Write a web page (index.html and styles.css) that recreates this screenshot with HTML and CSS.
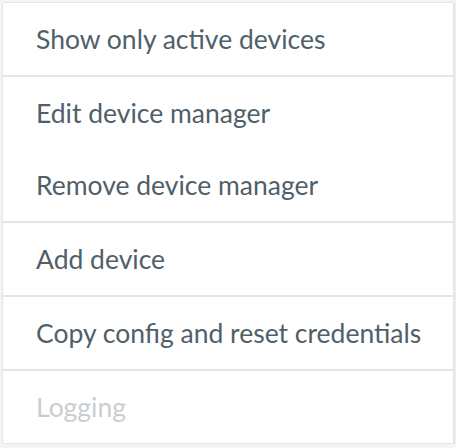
FILE: index.html
```html
<!DOCTYPE html>
<html>
<head>
<meta charset="utf-8">
<link rel="stylesheet" href="styles.css">
</head>
<body>
<div class="menu">
  <div class="group"><div class="item">Show only active devices</div></div>
  <div class="group"><div class="item">Edit device manager</div><div class="item">Remove device manager</div></div>
  <div class="group"><div class="item">Add device</div></div>
  <div class="group"><div class="item">Copy config and reset credentials</div></div>
  <div class="group"><div class="item disabled">Logging</div></div>
</div>
</body>
</html>
```
FILE: styles.css
```css
html, body {
  margin: 0;
  padding: 0;
  background: #f3f4f5;
}
body {
  padding: 2px 2px 0 2px;
  font-family: Lato, "Open Sans", sans-serif;
}
.menu {
  width: 450px;
  background: #ffffff;
  border: 1px solid #e4e7e9;
  box-shadow: 1px 1px 2px rgba(0, 0, 0, 0.08);
  border-radius: 2px;
}
.group + .group {
  border-top: 2px solid #e2e6e8;
}
.item {
  height: 72px;
  display: flex;
  align-items: center;
  padding-left: 33px;
  font-size: 26.5px;
  color: #50606a;
}
.item.disabled {
  color: #c9ced2;
}
```
